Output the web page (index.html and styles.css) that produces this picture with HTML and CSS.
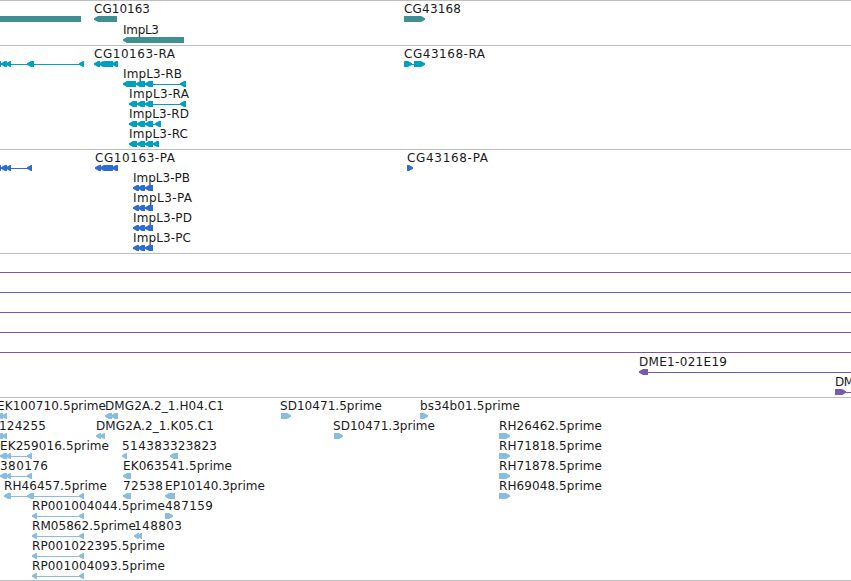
FILE: index.html
```html
<!DOCTYPE html>
<html lang="en">
<head>
<meta charset="utf-8">
<title>Genome browser</title>
<link rel="stylesheet" href="styles.css">
</head>
<body>
<main class="browser" id="browser"></main>
<script src="tracks.js"></script>
</body>
</html>
```
FILE: styles.css
```css
body {
  margin: 0;
  background: #fff;
}
.browser {
  display: flex;
  flex-direction: column;
  width: 851px;
  overflow: hidden;
  border-bottom: 1px solid #bebebe;
}
.track {
  border-top: 1px solid #bebebe;
  box-sizing: border-box;
}
.track-canvas {
  display: block;
  width: 851px;
  height: 100%;
}
.label {
  font: 12px "DejaVu Sans", sans-serif;
  fill: #1a1a1a;
}
.gene { height: 45px; color: #408f94; }
.transcript { height: 104px; color: #00a0c0; }
.protein { height: 104px; color: #306ccf; }
.clone { height: 144px; color: #7859ac; }
.est { height: 183px; color: #88bddf; }
.feature { fill: currentColor; }
```
FILE: tracks.js
```js
// Feature: [row, direction, blocks, span, label, labelStart, labelEnd]
const L = -1, R = 1;
const headBlocks = [[-5, 1], [1, 7], [6, 11]];
const tracks = [
  { name: "gene", pitch: 21, features: [
    [0, 0, [[-1, 81]]],
    [0, L, [[94, 117]], null, "CG10163", 94, 150],
    [1, L, [[123, 184]], null, "ImpL3", 123, 159],
    [0, R, [[404, 425]], null, "CG43168", 404, 461]
  ]},
  { name: "transcript", pitch: 20, features: [
    [0, L, [...headBlocks, [27, 34], [79, 84]], [0, 84]],
    [0, L, [[94, 100], [99, 113], [112, 118]], [94, 118], "CG10163-RA", 94, 175],
    [1, L, [[123, 136], [136, 145], [145, 153], [180, 186]], [123, 186], "ImpL3-RB", 123, 182],
    [2, L, [[129, 137], [137, 145], [145, 153], [180, 186]], [129, 186], "ImpL3-RA", 129, 189],
    [3, L, [[129, 137], [137, 145], [145, 153], [155, 161]], [129, 161], "ImpL3-RD", 129, 189],
    [4, L, [[129, 137], [137, 145], [145, 153], [153, 159]], [129, 159], "ImpL3-RC", 129, 188],
    [0, R, [[404, 412], [414, 425]], [404, 425], "CG43168-RA", 404, 485]
  ]},
  { name: "protein", pitch: 20, features: [
    [0, L, [...headBlocks, [27, 32]], [0, 32]],
    [0, L, [[95, 101], [100, 113], [112, 118]], [95, 118], "CG10163-PA", 95, 175],
    [1, L, [[133, 139], [138, 145], [145, 153]], [133, 153], "ImpL3-PB", 133, 190],
    [2, L, [[133, 139], [138, 145], [145, 153]], [133, 153], "ImpL3-PA", 133, 192],
    [3, L, [[133, 139], [138, 145], [145, 153]], [133, 153], "ImpL3-PD", 133, 192],
    [4, L, [[133, 139], [138, 145], [145, 153]], [133, 153], "ImpL3-PC", 133, 191],
    [0, R, [[407, 413]], null, "CG43168-PA", 407, 488]
  ]},
  { name: "clone", pitch: 20, features: [
    [0, 0, [], [0, 851]], [1, 0, [], [0, 851]], [2, 0, [], [0, 851]],
    [3, 0, [], [0, 851]], [4, 0, [], [0, 851]],
    [5, L, [[639, 648]], [639, 851], "DME1-021E19", 639, 727],
    [6, R, [[835, 846]], [835, 851], "DM", 835, 854]
  ]},
  { name: "est", pitch: 20, features: [
    [0, L, [[-3, 3], [2, 7]], null, "EK100710.5prime", -3, 106],
    [0, L, [[105, 112], [111, 118]], null, "DMG2A.2_1.H04.C1", 105, 224],
    [0, R, [[281, 291]], null, "SD10471.5prime", 280, 382],
    [0, R, [[420, 428]], null, "bs34b01.5prime", 420, 520],
    [1, L, [[-3, 3], [2, 7]], null, "124255", -1, 46],
    [1, L, [[96, 101], [100, 105]], null, "DMG2A.2_1.K05.C1", 96, 214],
    [1, R, [[334, 343]], null, "SD10471.3prime", 333, 435],
    [1, R, [[499, 510]], null, "RH26462.5prime", 499, 602],
    [2, L, [[0, 7], [6, 11], [27, 32]], [0, 32], "EK259016.5prime", 0, 109],
    [2, L, [[122, 127]], null, "514383", 122, 170],
    [2, L, [[170, 178]], null, "323823", 170, 217],
    [2, R, [[499, 510]], null, "RH71818.5prime", 499, 602],
    [3, L, [[0, 7], [6, 11], [27, 32]], [0, 32], "380176", 0, 48],
    [3, L, [[123, 131]], null, "EK063541.5prime", 123, 232],
    [3, R, [[499, 510]], null, "RH71878.5prime", 499, 602],
    [4, L, [[4, 11], [27, 34], [79, 84]], [4, 84], "RH46457.5prime", 4, 107],
    [4, L, [[123, 131]], null, "72538", 123, 163],
    [4, L, [[165, 175]], null, "EP10140.3prime", 165, 265],
    [4, R, [[499, 510]], null, "RH69048.5prime", 499, 602],
    [5, L, [[32, 37], [79, 84]], [32, 84], "RP001004044.5prime", 32, 165],
    [5, R, [[165, 173]], null, "487159", 165, 213],
    [6, L, [[32, 37], [79, 84]], [32, 84], "RM05862.5prime", 32, 136],
    [6, L, [[134, 139], [138, 142]], null, "148803", 134, 182],
    [7, L, [[32, 37], [79, 84]], [32, 84], "RP001022395.5prime", 32, 165],
    [8, L, [[32, 37], [79, 84]], [32, 84], "RP001004093.5prime", 32, 165]
  ]}
];

// A six pixel high block with a blunt taper at its leading end.
function block(a, b, dir, y) {
  if (!dir) return `M${a} ${y}H${b}V${y + 6}H${a}Z`;
  const h = Math.min(5, b - a);
  const tip = dir === L ? a : b;
  const tail = dir === L ? b : a;
  const x = d => tip - dir * d;
  return `M${tail} ${y}H${x(h * 0.8)}L${x(h * 0.35)} ${y + 1.3}L${tip} ${y + 2.2}V${y + 3.8}` +
    `L${x(h * 0.35)} ${y + 4.7}L${x(h * 0.8)} ${y + 6}H${tail}Z`;
}

document.getElementById("browser").innerHTML = tracks.map(track => {
  const body = track.features.map(([row, dir, blocks, span, label, start, end]) => {
    const top = row * track.pitch;
    let out = blocks.map(([a, b]) => `<path class="feature" d="${block(a, b, dir, top + 15)}"/>`).join("");
    if (span) out += `<rect class="feature" x="${span[0]}" y="${top + 18}" width="${span[1] - span[0]}" height="1"/>`;
    if (label) out += `<text class="label" x="${start}" y="${top + 12}" textLength="${end - start}">${label}</text>`;
    return out;
  }).join("");
  return `<section class="track ${track.name}"><svg class="track-canvas">${body}</svg></section>`;
}).join("");
```
